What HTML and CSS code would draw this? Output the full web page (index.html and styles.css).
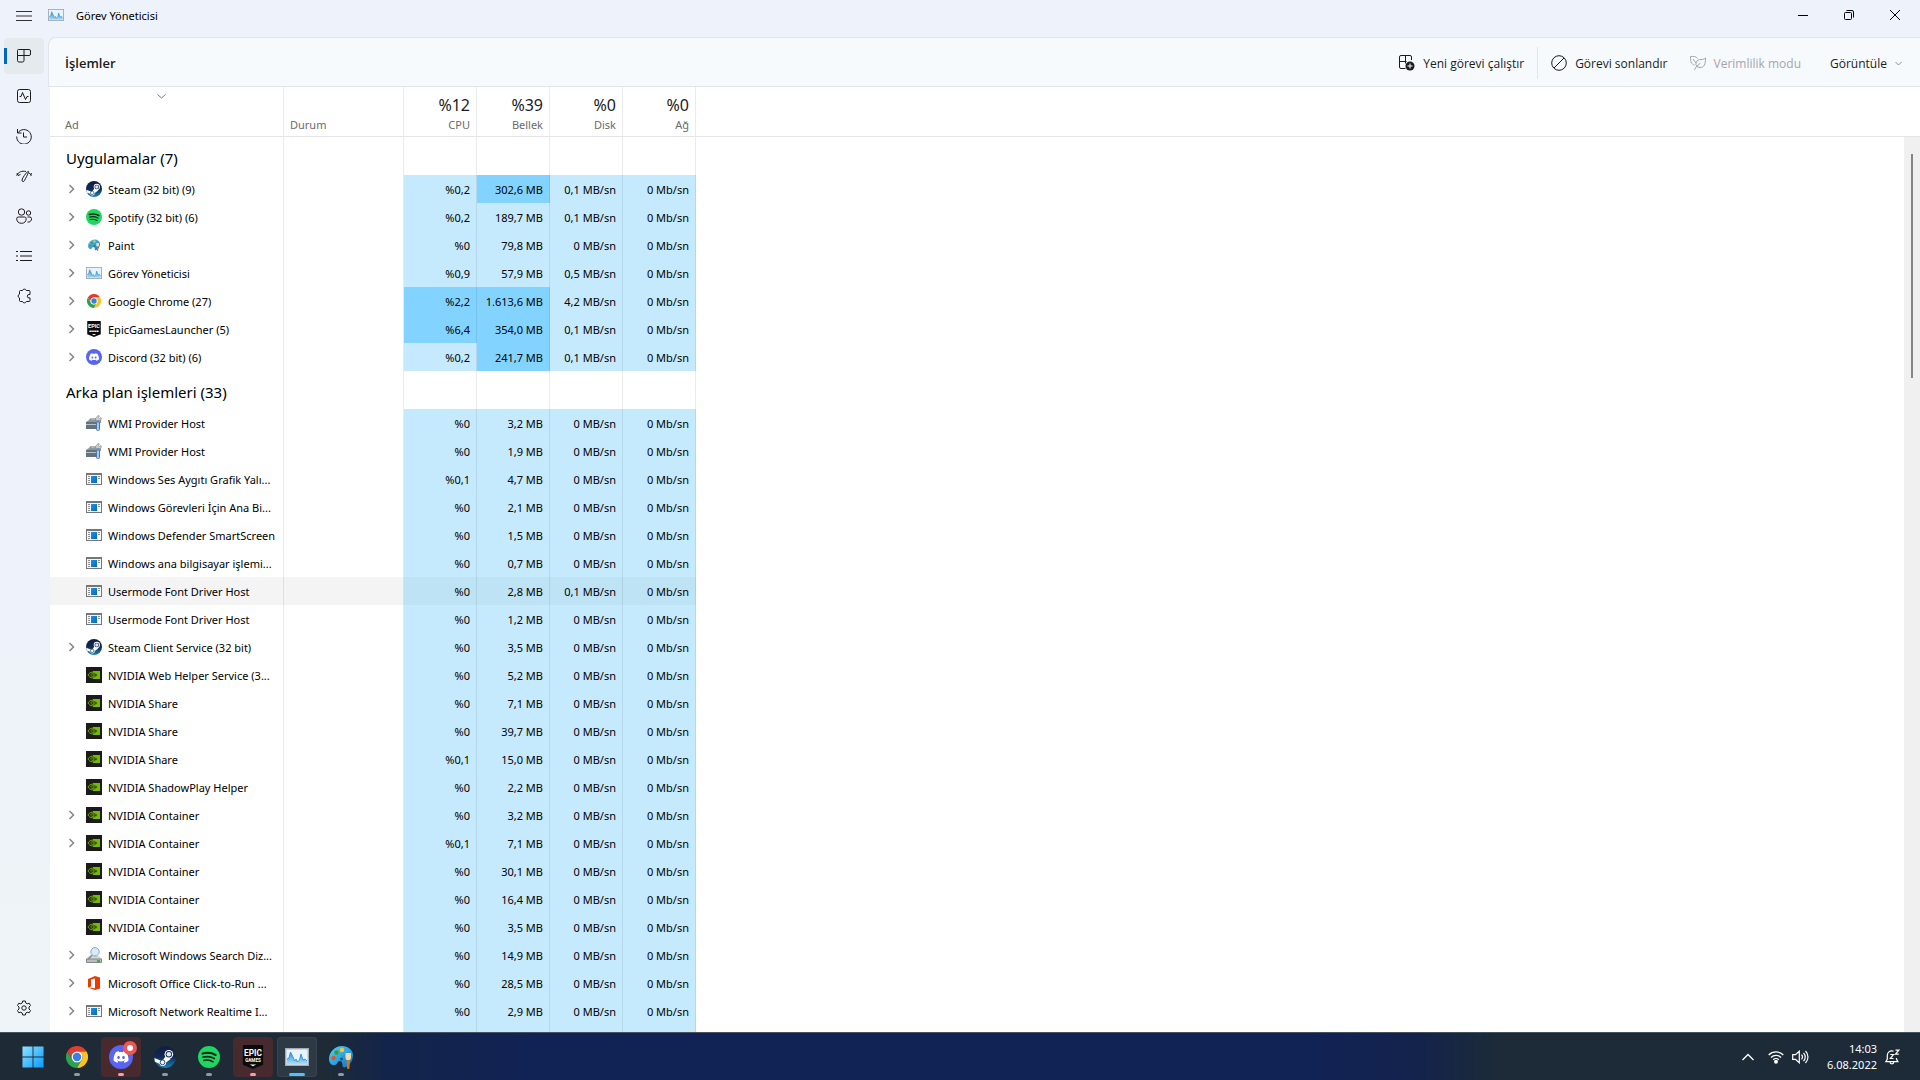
FILE: index.html
```html
<!DOCTYPE html>
<html lang="tr">
<head>
    <meta charset="UTF-8">
    <meta name="viewport" content="width=device-width, initial-scale=1.0">
    <title>Görev Yöneticisi</title>
    <link rel="stylesheet" href="styles.css">
</head>
<body>
    <svg class="sprite" aria-hidden="true">
        <defs>
            <linearGradient id="g-steam" x1="0" y1="0" x2="0" y2="1">
                <stop offset="0" stop-color="#111d3f"/>
                <stop offset="0.5" stop-color="#0f2a57"/>
                <stop offset="1" stop-color="#1a86b8"/>
            </linearGradient>
            <linearGradient id="g-win" x1="0" y1="0" x2="1" y2="1">
                <stop offset="0" stop-color="#8de3ff"/>
                <stop offset="1" stop-color="#0b9aff"/>
            </linearGradient>
            <linearGradient id="g-paint" x1="0" y1="0" x2="1" y2="1">
                <stop offset="0" stop-color="#4fd8f7"/>
                <stop offset="1" stop-color="#0f6fc4"/>
            </linearGradient>
            <linearGradient id="g-host" x1="0" y1="0" x2="1" y2="1">
                <stop offset="0" stop-color="#1a97e6"/>
                <stop offset="1" stop-color="#0667b8"/>
            </linearGradient>
            <linearGradient id="g-graph" x1="0" y1="0" x2="0" y2="1">
                <stop offset="0" stop-color="#2f93dc"/>
                <stop offset="1" stop-color="#a8dcfa"/>
            </linearGradient>
        </defs>

        <symbol id="steam" viewBox="0 0 24 24">
            <circle cx="12" cy="12" r="12" fill="url(#g-steam)"/>
            <path d="M.4 13.2l6.6 2.7 3-1 3.6-5.2 4.6 4.6-5 3.6A3.7 3.7 0 0 1 6 19.3L1 17.200z" fill="#fff"/>
            <circle cx="16.200" cy="9" r="4.700" fill="#fff"/>
            <circle cx="16.200" cy="9" r="3.500" fill="#152a52"/>
            <circle cx="16.200" cy="9" r="2.500" fill="#dfe6ee"/>
            <circle cx="9.300" cy="17.800" r="2.600" fill="none" stroke="#14406f" stroke-width="1"/>
        </symbol>

        <symbol id="spotify" viewBox="0 0 24 24">
            <circle cx="12" cy="12" r="12" fill="#1ed760"/>
            <g fill="none" stroke="#12261a" stroke-linecap="round">
                <path d="M5 8.300c4.700-1.400 10-1 14.200 1.500" stroke-width="2.300"/>
                <path d="M5.600 12.200c4.200-1.200 8.500-.8 12.200 1.400" stroke-width="1.900"/>
                <path d="M6.200 15.900c3.500-.9 7.200-.6 10.300 1.300" stroke-width="1.600"/>
            </g>
        </symbol>

        <symbol id="paint" viewBox="0 0 24 24">
            <path d="M13 1C6 1 0 7 0 14c0 4 3 7 6 6 3-1 2-4 5-4s2 4 3 6c2 2 10-3 10-12C24 5 19 1 13 1z" fill="url(#g-paint)"/>
            <circle cx="4.500" cy="13" r="2.200" fill="#e2522b"/>
            <circle cx="7.500" cy="7.500" r="2.200" fill="#3f9a35"/>
            <circle cx="13" cy="5" r="2.200" fill="#ffc52e"/>
            <circle cx="12.500" cy="14" r="1.500" fill="#12588f"/>
            <path d="M17.500 13h3.500l-.5 10c0 1.300-2.500 1.300-2.500 0z" fill="#c8791e"/>
            <path d="M16.500 8h5.500v5l-1 2h-3.500l-1-2z" fill="#f2d9ae"/>
        </symbol>

        <symbol id="taskmgr" viewBox="0 0 24 18">
            <rect x="0.700" y="0.700" width="22.600" height="16.600" fill="#e9f3fa" stroke="#a3adb5" stroke-width="1.400"/>
            <path d="M2 16V11l2-1 1.500-6L8 9l1.500 4 1.500-2 1.500 3 2-2L16 6l2 6 2-1 2 2v3z" fill="url(#g-graph)"/>
            <path d="M2 11l2-1 1.500-6L8 9l1.500 4 1.500-2 1.500 3 2-2L16 6l2 6 2-1 2 2" fill="none" stroke="#2587cf" stroke-width="0.800"/>
        </symbol>

        <symbol id="chrome" viewBox="0 0 24 24">
            <path d="M22.400 6H12a6 6 0 0 0-5.200 9L1.600 6a12 12 0 0 1 20.800 0z" fill="#e33b2e"/>
            <path d="M1.600 6l5.200 9a6 6 0 0 0 10.400 0L12 24A12 12 0 0 1 1.600 6z" fill="#2ba24c"/>
            <path d="M12 24l5.200-9A6 6 0 0 0 12 6h10.400A12 12 0 0 1 12 24z" fill="#fcc31e"/>
            <circle cx="12" cy="12" r="6" fill="#fff"/>
            <circle cx="12" cy="12" r="4.600" fill="#3b7de9"/>
        </symbol>

        <symbol id="discord" viewBox="0 0 24 24">
            <circle cx="12" cy="12" r="12" fill="#5865f2"/>
            <path transform="translate(4.600 4.600) scale(.62)" fill="#fff" d="M20.317 4.370a19.791 19.791 0 0 0-4.885-1.515.074.074 0 0 0-.079.037c-.211.375-.445.865-.608 1.250-1.845-.276-3.680-.276-5.487 0-.164-.393-.406-.874-.618-1.250a.077.077 0 0 0-.079-.037 19.736 19.736 0 0 0-4.885 1.515.070.070 0 0 0-.032.028C.533 9.046-.319 13.580.099 18.058a.082.082 0 0 0 .031.056c2.053 1.508 4.041 2.423 5.993 3.029a.078.078 0 0 0 .084-.028c.462-.630.873-1.295 1.226-1.994a.076.076 0 0 0-.042-.106c-.653-.248-1.274-.550-1.872-.892a.077.077 0 0 1-.008-.128c.126-.094.252-.192.372-.291a.074.074 0 0 1 .078-.011c3.928 1.793 8.180 1.793 12.061 0a.074.074 0 0 1 .079.010c.120.099.246.198.373.292a.077.077 0 0 1-.007.128 12.299 12.299 0 0 1-1.873.891.077.077 0 0 0-.041.107c.360.698.772 1.363 1.225 1.993a.076.076 0 0 0 .084.029c1.961-.607 3.950-1.522 6.002-3.029a.077.077 0 0 0 .031-.055c.500-5.177-.838-9.674-3.549-13.660a.061.061 0 0 0-.031-.029zM8.020 15.331c-1.183 0-2.157-1.086-2.157-2.419s.956-2.419 2.157-2.419c1.211 0 2.176 1.095 2.157 2.419 0 1.333-.956 2.419-2.157 2.419zm7.975 0c-1.183 0-2.157-1.086-2.157-2.419s.955-2.419 2.157-2.419c1.211 0 2.176 1.095 2.157 2.419 0 1.333-.946 2.419-2.157 2.419z"/>
        </symbol>

        <symbol id="wmi" viewBox="0 0 16 16">
            <path d="M4 6V4h6v2" fill="none" stroke="#5e6870"/>
            <path d="M9 4l3-3.500 1.500.5-1 1.500 1 1 1.500-1 .5 1.500-3 3z" fill="#c9ccd0" stroke="#7d848a" stroke-width="0.600"/>
            <path d="M0 7l3-2h12v3H0z" fill="#8b98a2"/>
            <rect x="0" y="7" width="14" height="7" fill="#63727d"/>
            <path d="M0 9.500h14" stroke="#b7c2c9"/>
            <rect x="10.500" y="7" width="3" height="8.500" rx="1" fill="#a9c8ee" stroke="#3c6cae" stroke-width="0.800"/>
        </symbol>

        <symbol id="host" viewBox="0 0 16 12">
            <path d="M0 0h16v12H0z" fill="#74767a"/>
            <path d="M1 2h14v9H1z" fill="#f6f6f6"/>
            <path d="M2 3.500h2M2 5.500h2M2 7.500h2M2 9.500h2M12 3.500h2M12 5.500h2" stroke="#8e9094"/>
            <path d="M5 3h6v7H5z" fill="url(#g-host)"/>
        </symbol>

        <symbol id="nvidia" viewBox="0 0 16 16">
            <path d="M0 0h16v16H0z" fill="#1b1b1b"/>
            <path d="M7 4h7v8H7z" fill="#76b900"/>
            <path d="M2 8c2-3.500 6-4 9.500 0-3.500 4-7.500 3.500-9.500 0z" fill="#1b1b1b" stroke="#76b900" stroke-width="0.900"/>
            <path d="M4.500 8c1.500-2 3.500-2 5 0-1.500 2-3.500 2-5 0z" fill="none" stroke="#76b900" stroke-width="0.900"/>
            <circle cx="7.300" cy="8" r="0.800" fill="#76b900"/>
        </symbol>

        <symbol id="search" viewBox="0 0 16 16">
            <path d="M3 9h10l3 3H0z" fill="#d4d6d9"/>
            <path d="M.5 12h15v3.500H.5z" fill="#b9bcc1" stroke="#84888d"/>
            <path d="M11 13h3v2h-3z" fill="#3fb52e"/>
            <path d="M6 8L2 12.500" stroke="#8c8f94" stroke-width="1.800"/>
            <circle cx="9" cy="4.800" r="4.200" fill="#d5ecfb" stroke="#8fa3b3"/>
        </symbol>

        <symbol id="office" viewBox="0 0 16 16">
            <path d="M2 4l7-3 5 1.500v11L9 15l-7-2.500 7 .7V3.500L5 4.500v7L2 12.500z" fill="#eb3c00"/>
        </symbol>

        <symbol id="chevron-right" viewBox="0 0 8 10">
            <path d="M1.500 1l4 4-4 4" fill="none" stroke="#858585" stroke-width="1.500"/>
        </symbol>
    </svg>

    <div class="window">
        <header class="titlebar">
            <button class="menu-btn" aria-label="Menü">
                <svg width="16" height="10" viewBox="0 0 16 10"><path d="M0 .5h16M0 5h16M0 9.500h16" stroke="#333"/></svg>
            </button>
            <svg class="app-icon" width="16" height="12"><use href="#taskmgr"/></svg>
            <span class="app-title">Görev Yöneticisi</span>
            <div class="window-controls">
                <button aria-label="Simge durumuna küçült">
                    <svg width="10" height="10" viewBox="0 0 10 10"><path d="M0 5.500h10" stroke="#000"/></svg>
                </button>
                <button aria-label="Önceki boyut">
                    <svg width="10" height="10" viewBox="0 0 10 10" fill="none" stroke="#000"><rect x="0.500" y="2.500" width="7" height="7" rx="1"/><path d="M2.500.5H8A1.500 1.500 0 0 1 9.500 2v5.500"/></svg>
                </button>
                <button aria-label="Kapat">
                    <svg width="10" height="10" viewBox="0 0 10 10"><path d="M0 0l10 10M10 0L0 10" stroke="#000"/></svg>
                </button>
            </div>
        </header>

        <div class="content">
            <nav class="sidebar">
                <button class="active" aria-label="İşlemler">
                    <svg viewBox="0 0 16 16"><path d="M2.500 1.500H13A1.500 1.500 0 0 1 14.500 3v3A1.500 1.500 0 0 1 13 7.500H1.500V2.500a1 1 0 0 1 1-1zM8 1.500v11A1.500 1.500 0 0 1 6.500 14H3a1.500 1.500 0 0 1-1.500-1.500v-5"/></svg>
                </button>
                <button aria-label="Performans">
                    <svg viewBox="0 0 16 16"><rect x="1.500" y="1.500" width="13" height="13" rx="2"/><path d="M3.500 8.500h1.500l1.500-4 3 7 1.500-3h1.500"/></svg>
                </button>
                <button aria-label="Uygulama geçmişi">
                    <svg viewBox="0 0 16 16"><path d="M1.500 1v4h4M1.800 5A7.300 7.300 0 1 1 .7 8.500M7.500 4.500v4.500h3.500"/></svg>
                </button>
                <button aria-label="Başlangıç uygulamaları">
                    <svg viewBox="0 0 16 16"><path d="M.5 7.500C2.500 4 6 2.500 10 3.500M13 5c1 .6 1.900 1.500 2.500 2.500M1 5l1 2.500 2.500-1M15.500 5l-1 2.500M11.800 3.500C10 5 6.500 9.500 6 12c-.3 1.700 1.700 2.200 2.400.7C9.500 10.500 11.800 6.500 12.500 4c.1-.6-.3-.8-.7-.5z"/></svg>
                </button>
                <button aria-label="Kullanıcılar">
                    <svg viewBox="0 0 16 16"><circle cx="5.500" cy="4" r="3.200"/><circle cx="12.500" cy="5" r="2.200"/><path d="M2.500 9h6a1.700 1.700 0 0 1 1.700 1.700c0 3-2 4.600-4.700 4.600S.7 13.700.7 10.700A1.700 1.700 0 0 1 2.500 9zM11.500 9h2.300a1.700 1.700 0 0 1 1.700 1.700c0 2.300-1.500 3.600-4 3.400"/></svg>
                </button>
                <button aria-label="Ayrıntılar">
                    <svg viewBox="0 0 16 16"><path d="M4 3.500h12M4 8h12M4 12.500h12M0 3.500h2M0 8h2M0 12.500h2"/></svg>
                </button>
                <button aria-label="Hizmetler">
                    <svg viewBox="0 0 16 16"><path d="M4.500 2.500h2a2 2 0 0 1 3.800 0h2.700a1 1 0 0 1 1 1v3h-1a1.700 1.700 0 0 0 0 3.400h1v2.600a1 1 0 0 1-1 1h-2.700a2 2 0 0 1-3.800 0h-2a1 1 0 0 1-1-1V10a2 2 0 0 1 0-3.800V3.500a1 1 0 0 1 1-1z"/></svg>
                </button>
                <button class="settings" aria-label="Ayarlar">
                    <svg viewBox="0 0 16 16"><circle cx="8" cy="8" r="2.200"/><path d="M6.700 1h2.600l.5 2 1.400.8 2-.6 1.300 2.300L13 7v2l1.500 1.500-1.300 2.300-2-.6-1.400.8-.5 2H6.700l-.5-2-1.400-.8-2 .6-1.300-2.300L3 9V7L1.500 5.500l1.300-2.300 2 .6L6.200 3z" stroke-linejoin="round"/></svg>
                </button>
            </nav>

            <main class="page">
                <div class="toolbar">
                    <h1>İşlemler</h1>
                    <button class="tool">
                        <svg width="16" height="16" viewBox="0 0 16 16" fill="none" stroke="#1b1b1b"><path d="M6.500 13.500H2A1.500 1.500 0 0 1 .5 12V2A1.500 1.500 0 0 1 2 .5h9A1.500 1.500 0 0 1 12.500 2v3M.5 6.500h7M6.500.5v6M6.500 6.500v2"/><circle cx="11" cy="11" r="4.500" fill="#1b1b1b" stroke="none"/><path d="M11 8.500v5M8.500 11h5" stroke="#fff"/></svg>
                        <span>Yeni görevi çalıştır</span>
                    </button>
                    <span class="divider"></span>
                    <button class="tool">
                        <svg width="16" height="16" viewBox="0 0 16 16" fill="none" stroke="#1b1b1b"><circle cx="8" cy="8" r="7.300"/><path d="M3 13L13 3"/></svg>
                        <span>Görevi sonlandır</span>
                    </button>
                    <button class="tool" disabled>
                        <svg width="16" height="16" viewBox="0 0 16 16" fill="none" stroke="#a3a6a8"><path d="M4.500 10C1.500 9.500.5 7 .5 1.500c3 0 5.500-.5 7 2M3 4l3 4M15.500 3c0 6-1 9.500-5.500 9.500-3 0-4.500-2-4-4.500C6.500 5 9 4.500 11 4.500c2 0 3.500-.5 4.500-1.500zM4.500 15l1.500-3 4.500-4"/></svg>
                        <span>Verimlilik modu</span>
                    </button>
                    <button class="tool view">
                        <span>Görüntüle</span>
                        <svg width="7" height="5" viewBox="0 0 7 5" fill="none" stroke="#8a8d90"><path d="M.5 1l3 3 3-3"/></svg>
                    </button>
                </div>

                <div class="list">
                    <div class="table-area">
                        <table>
                            <colgroup>
                                <col class="col-name"><col class="col-status"><col class="col-num"><col class="col-num"><col class="col-num"><col class="col-num"><col>
                            </colgroup>
                            <thead>
                                <tr>
                                    <th scope="col" class="name sorted"><svg width="9" height="5" viewBox="0 0 9 5"><path d="M.5.5l4 3.500 4-3.500" fill="none" stroke="#777"/></svg><span>Ad</span></th>
                                    <th scope="col">Durum</th>
                                    <th scope="col" class="num"><b>%12</b>CPU</th>
                                    <th scope="col" class="num"><b>%39</b>Bellek</th>
                                    <th scope="col" class="num"><b>%0</b>Disk</th>
                                    <th scope="col" class="num"><b>%0</b>Ağ</th>
                                    <td></td>
                                </tr>
                            </thead>
                            <tbody>
                                <tr class="group"><th scope="rowgroup">Uygulamalar (7)</th><td></td><td></td><td></td><td></td><td></td></tr>
                                <tr><td><div class="proc"><button aria-label="Genişlet"><svg><use href="#chevron-right"/></svg></button><svg class="ico"><use href="#steam"/></svg>Steam (32 bit) (9)</div></td><td></td><td>%0,2</td><td class="hot">302,6 MB</td><td>0,1 MB/sn</td><td>0 Mb/sn</td></tr>
                                <tr><td><div class="proc"><button aria-label="Genişlet"><svg><use href="#chevron-right"/></svg></button><svg class="ico"><use href="#spotify"/></svg>Spotify (32 bit) (6)</div></td><td></td><td>%0,2</td><td>189,7 MB</td><td>0,1 MB/sn</td><td>0 Mb/sn</td></tr>
                                <tr><td><div class="proc"><button aria-label="Genişlet"><svg><use href="#chevron-right"/></svg></button><svg class="ico small"><use href="#paint"/></svg>Paint</div></td><td></td><td>%0</td><td>79,8 MB</td><td>0 MB/sn</td><td>0 Mb/sn</td></tr>
                                <tr><td><div class="proc"><button aria-label="Genişlet"><svg><use href="#chevron-right"/></svg></button><svg class="ico"><use href="#taskmgr"/></svg>Görev Yöneticisi</div></td><td></td><td>%0,9</td><td>57,9 MB</td><td>0,5 MB/sn</td><td>0 Mb/sn</td></tr>
                                <tr><td><div class="proc"><button aria-label="Genişlet"><svg><use href="#chevron-right"/></svg></button><svg class="ico chrome"><use href="#chrome"/></svg>Google Chrome (27)</div></td><td></td><td class="hot">%2,2</td><td class="hot">1.613,6 MB</td><td>4,2 MB/sn</td><td>0 Mb/sn</td></tr>
                                <tr><td><div class="proc"><button aria-label="Genişlet"><svg><use href="#chevron-right"/></svg></button><svg class="ico" viewBox="0 0 24 26"><path d="M2 0h20a1 1 0 0 1 1 1v20.500L12 26 1 21.500V1a1 1 0 0 1 1-1z" fill="#0b0b0b"/><text x="12" y="12" text-anchor="middle" class="epic-big">EPIC</text><path d="M4.500 16.500h15" stroke="#fff" stroke-width="2.500" stroke-dasharray="2.500 .6"/><path d="M8.500 21h7L12 23z" fill="#fff"/></svg>EpicGamesLauncher (5)</div></td><td></td><td class="hot">%6,4</td><td class="hot">354,0 MB</td><td>0,1 MB/sn</td><td>0 Mb/sn</td></tr>
                                <tr><td><div class="proc"><button aria-label="Genişlet"><svg><use href="#chevron-right"/></svg></button><svg class="ico"><use href="#discord"/></svg>Discord (32 bit) (6)</div></td><td></td><td>%0,2</td><td class="hot">241,7 MB</td><td>0,1 MB/sn</td><td>0 Mb/sn</td></tr>
                            </tbody>
                            <tbody>
                                <tr class="group"><th scope="rowgroup">Arka plan işlemleri (33)</th><td></td><td></td><td></td><td></td><td></td></tr>
                                <tr><td><div class="proc leaf"><svg class="ico"><use href="#wmi"/></svg>WMI Provider Host</div></td><td></td><td>%0</td><td>3,2 MB</td><td>0 MB/sn</td><td>0 Mb/sn</td></tr>
                                <tr><td><div class="proc leaf"><svg class="ico"><use href="#wmi"/></svg>WMI Provider Host</div></td><td></td><td>%0</td><td>1,9 MB</td><td>0 MB/sn</td><td>0 Mb/sn</td></tr>
                                <tr><td><div class="proc leaf"><svg class="ico"><use href="#host"/></svg>Windows Ses Aygıtı Grafik Yalı...</div></td><td></td><td>%0,1</td><td>4,7 MB</td><td>0 MB/sn</td><td>0 Mb/sn</td></tr>
                                <tr><td><div class="proc leaf"><svg class="ico"><use href="#host"/></svg>Windows Görevleri İçin Ana Bi...</div></td><td></td><td>%0</td><td>2,1 MB</td><td>0 MB/sn</td><td>0 Mb/sn</td></tr>
                                <tr><td><div class="proc leaf"><svg class="ico"><use href="#host"/></svg>Windows Defender SmartScreen</div></td><td></td><td>%0</td><td>1,5 MB</td><td>0 MB/sn</td><td>0 Mb/sn</td></tr>
                                <tr><td><div class="proc leaf"><svg class="ico"><use href="#host"/></svg>Windows ana bilgisayar işlemi...</div></td><td></td><td>%0</td><td>0,7 MB</td><td>0 MB/sn</td><td>0 Mb/sn</td></tr>
                                <tr class="hovered"><td><div class="proc leaf"><svg class="ico"><use href="#host"/></svg>Usermode Font Driver Host</div></td><td></td><td>%0</td><td>2,8 MB</td><td>0,1 MB/sn</td><td>0 Mb/sn</td></tr>
                                <tr><td><div class="proc leaf"><svg class="ico"><use href="#host"/></svg>Usermode Font Driver Host</div></td><td></td><td>%0</td><td>1,2 MB</td><td>0 MB/sn</td><td>0 Mb/sn</td></tr>
                                <tr><td><div class="proc"><button aria-label="Genişlet"><svg><use href="#chevron-right"/></svg></button><svg class="ico"><use href="#steam"/></svg>Steam Client Service (32 bit)</div></td><td></td><td>%0</td><td>3,5 MB</td><td>0 MB/sn</td><td>0 Mb/sn</td></tr>
                                <tr><td><div class="proc leaf"><svg class="ico"><use href="#nvidia"/></svg>NVIDIA Web Helper Service (3...</div></td><td></td><td>%0</td><td>5,2 MB</td><td>0 MB/sn</td><td>0 Mb/sn</td></tr>
                                <tr><td><div class="proc leaf"><svg class="ico"><use href="#nvidia"/></svg>NVIDIA Share</div></td><td></td><td>%0</td><td>7,1 MB</td><td>0 MB/sn</td><td>0 Mb/sn</td></tr>
                                <tr><td><div class="proc leaf"><svg class="ico"><use href="#nvidia"/></svg>NVIDIA Share</div></td><td></td><td>%0</td><td>39,7 MB</td><td>0 MB/sn</td><td>0 Mb/sn</td></tr>
                                <tr><td><div class="proc leaf"><svg class="ico"><use href="#nvidia"/></svg>NVIDIA Share</div></td><td></td><td>%0,1</td><td>15,0 MB</td><td>0 MB/sn</td><td>0 Mb/sn</td></tr>
                                <tr><td><div class="proc leaf"><svg class="ico"><use href="#nvidia"/></svg>NVIDIA ShadowPlay Helper</div></td><td></td><td>%0</td><td>2,2 MB</td><td>0 MB/sn</td><td>0 Mb/sn</td></tr>
                                <tr><td><div class="proc"><button aria-label="Genişlet"><svg><use href="#chevron-right"/></svg></button><svg class="ico"><use href="#nvidia"/></svg>NVIDIA Container</div></td><td></td><td>%0</td><td>3,2 MB</td><td>0 MB/sn</td><td>0 Mb/sn</td></tr>
                                <tr><td><div class="proc"><button aria-label="Genişlet"><svg><use href="#chevron-right"/></svg></button><svg class="ico"><use href="#nvidia"/></svg>NVIDIA Container</div></td><td></td><td>%0,1</td><td>7,1 MB</td><td>0 MB/sn</td><td>0 Mb/sn</td></tr>
                                <tr><td><div class="proc leaf"><svg class="ico"><use href="#nvidia"/></svg>NVIDIA Container</div></td><td></td><td>%0</td><td>30,1 MB</td><td>0 MB/sn</td><td>0 Mb/sn</td></tr>
                                <tr><td><div class="proc leaf"><svg class="ico"><use href="#nvidia"/></svg>NVIDIA Container</div></td><td></td><td>%0</td><td>16,4 MB</td><td>0 MB/sn</td><td>0 Mb/sn</td></tr>
                                <tr><td><div class="proc leaf"><svg class="ico"><use href="#nvidia"/></svg>NVIDIA Container</div></td><td></td><td>%0</td><td>3,5 MB</td><td>0 MB/sn</td><td>0 Mb/sn</td></tr>
                                <tr><td><div class="proc"><button aria-label="Genişlet"><svg><use href="#chevron-right"/></svg></button><svg class="ico"><use href="#search"/></svg>Microsoft Windows Search Diz...</div></td><td></td><td>%0</td><td>14,9 MB</td><td>0 MB/sn</td><td>0 Mb/sn</td></tr>
                                <tr><td><div class="proc"><button aria-label="Genişlet"><svg><use href="#chevron-right"/></svg></button><svg class="ico"><use href="#office"/></svg>Microsoft Office Click-to-Run ...</div></td><td></td><td>%0</td><td>28,5 MB</td><td>0 MB/sn</td><td>0 Mb/sn</td></tr>
                                <tr><td><div class="proc"><button aria-label="Genişlet"><svg><use href="#chevron-right"/></svg></button><svg class="ico"><use href="#host"/></svg>Microsoft Network Realtime I...</div></td><td></td><td>%0</td><td>2,9 MB</td><td>0 MB/sn</td><td>0 Mb/sn</td></tr>
                                <tr><td></td><td></td><td></td><td></td><td></td><td></td></tr>
                            </tbody>
                        </table>
                    </div>
                    <div class="scroll">
                        <div class="scroll-head"></div>
                        <div class="scroll-track"><div class="scroll-thumb"></div></div>
                    </div>
                </div>
            </main>
        </div>
    </div>

    <footer class="taskbar">
        <div class="pinned">
            <button aria-label="Başlat"><svg width="24" height="24" viewBox="0 0 24 24"><path d="M.5.5h11v11H.5zM12.500.5h11v11h-11zM.5 12.500h11v11H.5zM12.500 12.500h11v11h-11z" fill="url(#g-win)"/></svg></button>
            <button class="running" aria-label="Google Chrome"><svg><use href="#chrome"/></svg></button>
            <button class="running alert" aria-label="Discord"><svg class="large"><use href="#discord"/></svg><i class="badge"></i></button>
            <button class="running" aria-label="Steam"><svg><use href="#steam"/></svg></button>
            <button class="running" aria-label="Spotify"><svg><use href="#spotify"/></svg></button>
            <button class="running alert" aria-label="Epic Games"><svg class="large" viewBox="0 0 24 26"><path d="M2 0h20a1 1 0 0 1 1 1v20.500L12 26 1 21.500V1a1 1 0 0 1 1-1z" fill="#0b0b0b"/><text x="12" y="12" text-anchor="middle" class="epic-big">EPIC</text><text x="12" y="18" text-anchor="middle" class="epic-small">GAMES</text><path d="M8.500 21h7L12 23z" fill="#fff"/></svg></button>
            <button class="running current" aria-label="Görev Yöneticisi"><svg class="large"><use href="#taskmgr"/></svg></button>
            <button class="running" aria-label="Paint"><svg class="large"><use href="#paint"/></svg></button>
        </div>
        <div class="tray">
            <button aria-label="Gizli simgeler"><svg width="12" height="8" viewBox="0 0 12 8" fill="none" stroke="#fff" stroke-width="1.300"><path d="M.5 7L6 1.500 11.500 7"/></svg></button>
            <button class="net" aria-label="Ağ ve ses">
                <svg width="16" height="14" viewBox="0 0 16 14" fill="none" stroke="#fff" stroke-width="1.300"><path d="M.7 5a10.300 10.300 0 0 1 14.600 0M3 7.500a7 7 0 0 1 10 0M5.200 9.800a4 4 0 0 1 5.600 0"/><circle cx="8" cy="11.800" r="1.300" fill="#fff"/></svg>
                <svg width="17" height="14" viewBox="0 0 17 14" fill="none" stroke="#fff" stroke-width="1.200"><path d="M.7 4.700h2.800L7.300 1.200v11.600L3.500 9.300H.7zM9.500 4.700a3.500 3.500 0 0 1 0 4.600M11.500 2.800a6 6 0 0 1 0 8.400M13.500 1a8.500 8.500 0 0 1 0 12"/></svg>
            </button>
            <button class="clock"><span>14:03</span><span>6.08.2022</span></button>
            <button class="bell" aria-label="Bildirimler"><svg width="15" height="16" viewBox="0 0 15 16" fill="none" stroke="#fff" stroke-width="1.200"><path d="M8.500 2.200C4.500 1.200 2.300 3.500 2.300 6.500v3.500L.9 12.600h12L11.500 10V9M5 13c0 2.500 3.800 2.500 3.800 0M5.300 5.500h3.200L5.300 9.500h3.200M10.500 1.200h3.300l-3.300 4h3.300"/></svg></button>
        </div>
    </footer>
</body>
</html>
```
FILE: styles.css
```css
* {
    box-sizing: border-box;
}

body {
    margin: 0;
    height: 100vh;
    display: flex;
    flex-direction: column;
    overflow: hidden;
    font-family: "Noto Sans", "Open Sans", sans-serif;
    font-size: 11px;
    color: #000;
    background-color: #eef2fa;
}

button {
    display: flex;
    align-items: center;
    justify-content: center;
    flex-shrink: 0;
    padding: 0;
    border: 0;
    background: none;
    font: inherit;
    color: inherit;
}

svg {
    display: block;
    flex-shrink: 0;
}

.sprite {
    position: absolute;
    width: 0;
    height: 0;
}

.epic-big {
    font: bold 9px "Roboto", sans-serif;
    fill: #fff;
}

.epic-small {
    font: bold 5px "Roboto", sans-serif;
    fill: #fff;
}

.window {
    flex: 1;
    min-height: 0;
    display: flex;
    flex-direction: column;
    background: linear-gradient(#eef2fa, #eef2fa 60%, #eef4f8);
}

/* title bar */
.titlebar {
    display: flex;
    align-items: flex-start;
    height: 37px;
    padding-right: 2px;
}

.menu-btn {
    width: 48px;
    height: 32px;
}

.app-icon {
    margin: 9px 12px 0 0;
}

.app-title {
    line-height: 32px;
}

.window-controls {
    display: flex;
    margin-left: auto;
}

.window-controls button {
    width: 46px;
    height: 29px;
}

.content {
    flex: 1;
    min-height: 0;
    display: flex;
}

/* left navigation */
.sidebar {
    display: flex;
    flex-direction: column;
    gap: 4px;
    width: 48px;
    padding: 1px 4px 6px;
}

.sidebar button {
    height: 36px;
    border-radius: 4px;
}

.sidebar svg {
    width: 16px;
    height: 16px;
    fill: none;
    stroke: #1b1b1b;
}

.sidebar .active {
    background: linear-gradient(#0067c0, #0067c0) left center / 3px 16px no-repeat #e5eaee;
}

.sidebar .settings {
    margin-top: auto;
}

/* page */
.page {
    flex: 1;
    min-width: 0;
    display: flex;
    flex-direction: column;
}

.toolbar {
    display: flex;
    align-items: center;
    height: 50px;
    padding: 2px 18px 0 16px;
    background-color: #f7fafd;
    border: 1px solid #dfe5ea;
    border-right: 0;
    border-top-left-radius: 8px;
    font-family: "Open Sans", sans-serif;
    font-size: 12px;
    color: #1b1b1b;
}

.toolbar h1 {
    margin: 0 auto 0 0;
    font-size: 13px;
    font-weight: 600;
}

.tool {
    gap: 8px;
    padding: 0 11px;
    height: 32px;
}

.tool:disabled {
    color: #a3a6a8;
}

.tool.view {
    padding: 0 0 0 18px;
}

.divider {
    width: 1px;
    height: 32px;
    margin: 0 2px;
    background-color: #e0e5ea;
}

.list {
    flex: 1;
    min-height: 0;
    display: flex;
    margin-left: 2px;
    background-color: #fff;
}

.table-area {
    flex: 1;
    min-width: 0;
    overflow: hidden;
}

table {
    width: 100%;
    table-layout: fixed;
    border-collapse: separate;
    border-spacing: 0;
}

.col-name {
    width: 234px;
}

.col-status {
    width: 120px;
}

.col-num {
    width: 73px;
}

th,
td {
    padding: 0;
    text-align: left;
    font-weight: normal;
    white-space: nowrap;
    border-right: 1px solid rgba(0, 0, 0, 0.08);
}

thead th,
thead td {
    height: 50px;
    padding: 0 6px 1px;
    vertical-align: bottom;
    line-height: 20px;
    color: #6b6b6b;
    border-bottom: 1px solid #e5e5e5;
}

thead td {
    border-right: 0;
}

thead .num {
    text-align: right;
}

thead b {
    display: block;
    font-size: 16px;
    font-weight: normal;
    color: #1b1b1b;
}

thead .name {
    padding-left: 15px;
    padding-right: 26px;
}

.sorted svg {
    margin: 0 auto 16px;
}

.sorted span {
    display: block;
}

tbody tr {
    height: 28px;
}

tbody td:nth-child(n+3) {
    padding-right: 6px;
    text-align: right;
    background-color: #c5eafe;
}

tbody td.hot:nth-child(n+3) {
    background-color: #82d3ff;
}

tbody .group {
    height: 38px;
}

.group th {
    padding: 4px 0 0 16px;
    font-size: 15px;
}

tbody .group td:nth-child(n+3) {
    background-color: transparent;
}

.hovered td {
    background-color: #f4f4f4;
}

tbody .hovered td:nth-child(n+3) {
    background-color: #bde3f5;
}

.proc {
    display: flex;
    align-items: center;
    gap: 6px;
    padding-left: 16px;
}

.proc.leaf {
    padding-left: 36px;
}

.proc button {
    width: 14px;
    height: 20px;
    padding-right: 2px;
}

.proc button svg {
    width: 8px;
    height: 10px;
}

.ico {
    width: 16px;
    height: 16px;
}

.ico.small {
    padding: 2px;
}

.ico.chrome {
    padding: 1px;
}

.scroll {
    display: flex;
    flex-direction: column;
    width: 16px;
}

.scroll-head {
    height: 50px;
    border-bottom: 1px solid #e5e5e5;
}

.scroll-track {
    flex: 1;
    padding: 17px 7px;
    background-color: #f0f0f0;
}

.scroll-thumb {
    width: 2px;
    height: 26%;
    background-color: #858585;
}

/* taskbar */
.taskbar {
    display: flex;
    align-items: center;
    justify-content: space-between;
    height: 48px;
    padding: 0 20px 0 13px;
    border-top: 1px solid #46535c;
    background: linear-gradient(90deg, #1e2b36 0, #1e2b36 17%, #13244a 20%, #112255 28%, #112255 68%, #14234c 74%, #1c2b37 78%, #1c2b37);
    color: #fff;
}

.pinned {
    display: flex;
    gap: 4px;
}

.pinned button {
    position: relative;
    width: 40px;
    height: 40px;
    border-radius: 4px;
}

.pinned svg {
    width: 22px;
    height: 22px;
}

.pinned .large {
    width: 24px;
    height: 24px;
}

/* running indicator */
.running::after {
    content: "";
    position: absolute;
    left: 17px;
    bottom: 1px;
    width: 6px;
    height: 3px;
    border-radius: 2px;
    background-color: #9299a0;
}

.alert {
    background-color: #462a2d;
}

.alert::after {
    background-color: #ff99a4;
}

.current {
    background-color: #2d3a45;
    box-shadow: inset 0 0 0 1px #364450;
}

.current::after {
    left: 12px;
    width: 16px;
    background-color: #4cc2ff;
}

.badge {
    position: absolute;
    top: 4px;
    right: 4px;
    width: 14px;
    height: 14px;
    border: 4px solid #eb5757;
    border-radius: 50%;
    background-color: #fff;
}

.tray {
    display: flex;
    align-items: center;
}

.tray .net {
    gap: 8px;
    margin: 0 18px 0 14px;
}

.clock {
    flex-direction: column;
    align-items: flex-end;
    line-height: 16px;
}

.bell {
    margin-left: 8px;
}
```
